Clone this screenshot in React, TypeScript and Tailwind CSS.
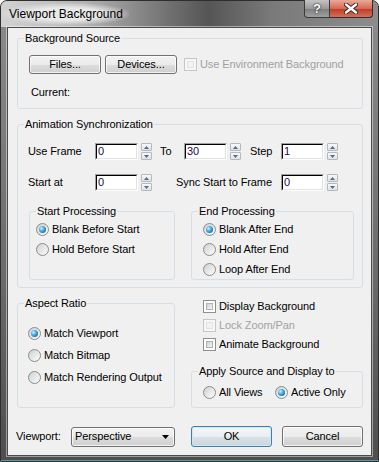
import type { ReactNode } from "react";

function Spin() {
  return (
    <div className="ml-[3px] flex h-[17px] w-[11px] flex-col gap-[1px]">
      {[0, 1].map((i) => (
        <div
          key={i}
          className="flex h-[8px] items-center justify-center rounded-[1px] border border-[#b4b9c0] bg-[linear-gradient(to_bottom,#f8f8f8,#dfe2e6)]"
        >
          <svg width="5" height="3" viewBox="0 0 5 3">
            <path d={i === 0 ? "M0 3 L2.5 0 L5 3Z" : "M0 0 L2.5 3 L5 0Z"} fill="#56698c" />
          </svg>
        </div>
      ))}
    </div>
  );
}

function Num({ v }: { v: string }) {
  return (
    <div className="flex items-center">
      <div className="h-[17px] w-[43px] border border-t-[#a0a0a0] border-l-[#a0a0a0] border-r-white border-b-white">
        <div className="h-full w-full border border-t-black border-l-black border-r-[#e3e3e3] border-b-[#e3e3e3] bg-white pl-[1px] leading-[13px] text-[#1e0a50]">
          {v}
        </div>
      </div>
      <Spin />
    </div>
  );
}

function Radio({ on }: { on?: boolean }) {
  return (
    <span className="flex h-[13px] w-[13px] shrink-0 items-center justify-center rounded-full border border-[#8a8b8c] bg-[linear-gradient(135deg,#cfd0d1,#fdfdfd)]">
      {on && (
        <span className="h-[7px] w-[7px] rounded-full bg-[radial-gradient(circle_at_35%_35%,#c8f2ff_0%,#3ca4e0_45%,#0a4a86_100%)]" />
      )}
    </span>
  );
}

function Check({ dis }: { dis?: boolean }) {
  return (
    <span
      className={`block h-[13px] w-[13px] shrink-0 border p-[2px] ${
        dis ? "border-[#c6c6c6] bg-[#f7f7f7]" : "border-[#8e8f8f] bg-white"
      }`}
    >
      <span
        className={`block h-full w-full border ${
          dis
            ? "border-[#e2e2e2] bg-[#f2f2f2]"
            : "border-[#aeb3b9] bg-[linear-gradient(135deg,#cbcfd5,#f6f6f6)]"
        }`}
      />
    </span>
  );
}

function Btn({ children, def, className }: { children: ReactNode; def?: boolean; className: string }) {
  return (
    <button
      type="button"
      className={`flex items-center justify-center rounded-[3px] border text-black ${
        def
          ? "border-[#3c7fb1] bg-[linear-gradient(to_bottom,#f3f6f8_0%,#e9eef1_50%,#d8e1e6_51%,#cbd6dc_100%)] shadow-[inset_0_0_0_1px_#cdeafb]"
          : "border-[#707070] bg-[linear-gradient(to_bottom,#f2f2f2_0%,#ebebeb_50%,#dddddd_51%,#cfcfcf_100%)] shadow-[inset_0_0_0_1px_rgba(255,255,255,0.75)]"
      } ${className}`}
    >
      {children}
    </button>
  );
}

function Group({
  title,
  className,
  inner,
  children,
}: {
  title: string;
  className: string;
  inner: string;
  children?: ReactNode;
}) {
  return (
    <fieldset className={`rounded-[3px] border border-[#d5dfe5] ${className}`}>
      <legend className="ml-[6px] px-[1px] leading-[16px]">{title}</legend>
      <div className={inner}>{children}</div>
    </fieldset>
  );
}

function Opt({ on, label, h }: { on?: boolean; label: string; h: string }) {
  return (
    <div className={`flex items-center gap-[3px] ${h}`}>
      <Radio on={on} />
      <span>{label}</span>
    </div>
  );
}

export default function App() {
  return (
    <div className="flex h-[462px] w-[379px] flex-col rounded-t-[7px] border border-[#2e2e2e] bg-[linear-gradient(to_bottom,#8d8d8d,#6a6a6a_60%,#4e4e4e)] text-[11px] tracking-[-0.1px] text-black shadow-[inset_0_-1px_0_#4aa3b5] [font-family:'Liberation_Sans',Arial,sans-serif]">
      {/* Title bar */}
      <div className="flex h-[26px] shrink-0 justify-between rounded-t-[6px] bg-[linear-gradient(to_right,#d2d2d2_0%,#b3b3b3_22%,#6f6f6f_45%,#555555_55%,#7a7a7a_72%,#8c8c8c_100%)]">
        <div className="ml-[2px] mt-[2px] h-[22px] rounded-full bg-[radial-gradient(ellipse_at_center,rgba(235,235,235,0.95)_40%,rgba(220,220,220,0)_75%)] px-[6px]">
          <span className="mt-[3px] block text-[12px] leading-[16px] tracking-normal">Viewport Background</span>
        </div>
        <div className="-mt-[1px] mr-[5px] flex h-[18px]">
          <div className="flex w-[26px] items-center justify-center rounded-bl-[4px] border border-t-0 border-[#3a3a3a] bg-[linear-gradient(to_bottom,#c4c4c4,#9a9a9a_50%,#7c7c7c_51%,#a0a0a0)] text-[13px] font-bold leading-none text-white [text-shadow:0_0_2px_#222,0_0_1px_#222]">
            ?
          </div>
          <div className="flex w-[43px] items-center justify-center rounded-br-[4px] border border-l-0 border-t-0 border-[#3a2a2a] bg-[linear-gradient(to_bottom,#eba99a,#d46a55_50%,#c03a22_51%,#d4705a)]">
            <svg width="14" height="11" viewBox="0 0 14 11">
              <path d="M2 1.5 L12 9.5 M12 1.5 L2 9.5" stroke="#3a2320" strokeWidth="4.2" strokeLinecap="round" />
              <path d="M2 1.5 L12 9.5 M12 1.5 L2 9.5" stroke="#ffffff" strokeWidth="2.4" strokeLinecap="round" />
            </svg>
          </div>
        </div>
      </div>

      {/* Client area */}
      <div className="mx-[6px] mb-[5px] flex-1 border border-[#4b4b4b] bg-[#f0f0f0] pl-[9px] pr-[8px] shadow-[0_0_0_1px_rgba(255,255,255,0.45)]">
        <Group title="Background Source" className="mt-[2px] h-[79px]" inner="pl-[11px] pt-[9px]">
          <div className="flex items-center">
            <Btn className="h-[19px] w-[72px]">Files...</Btn>
            <Btn className="ml-[4px] h-[19px] w-[72px]">Devices...</Btn>
            <div className="ml-[7px] flex items-center gap-[3px] text-[#a0a0a0]">
              <Check dis />
              <span>Use Environment Background</span>
            </div>
          </div>
          <div className="ml-[2px] mt-[10px] leading-[16px]">Current:</div>
        </Group>

        <Group title="Animation Synchronization" className="mt-[7px] h-[172px]" inner="pl-[10px] pt-[11px]">
          <div className="flex h-[17px] items-center">
            <span className="w-[67px]">Use Frame</span>
            <Num v="0" />
            <span className="ml-[8px] w-[24px]">To</span>
            <Num v="30" />
            <span className="ml-[9px] w-[31px]">Step</span>
            <Num v="1" />
          </div>
          <div className="mt-[14px] flex h-[17px] items-center">
            <span className="w-[67px]">Start at</span>
            <Num v="0" />
            <span className="ml-[24px] w-[105px]">Sync Start to Frame</span>
            <Num v="0" />
          </div>
          <div className="ml-[1px] mt-[12px] flex gap-[16px]">
            <Group title="Start Processing" className="h-[77px] w-[146px]" inner="pl-[6px]">
              <Opt on label="Blank Before Start" h="h-[20px]" />
              <Opt label="Hold Before Start" h="h-[20px]" />
            </Group>
            <Group title="End Processing" className="h-[77px] w-[163px]" inner="pl-[11px]">
              <Opt on label="Blank After End" h="h-[20px]" />
              <Opt label="Hold After End" h="h-[20px]" />
              <Opt label="Loop After End" h="h-[20px]" />
            </Group>
          </div>
        </Group>

        <div className="mt-[7px] flex gap-[16px]">
          <Group title="Aspect Ratio" className="h-[113px] w-[158px]" inner="pl-[10px] pt-[11px]">
            <Opt on label="Match Viewport" h="h-[22px]" />
            <Opt label="Match Bitmap" h="h-[22px]" />
            <Opt label="Match Rendering Output" h="h-[22px]" />
          </Group>
          <div className="flex w-[172px] flex-col">
            <div className="pl-[12px] pt-[2px]">
              <div className="flex h-[19px] items-center gap-[3px]">
                <Check />
                <span>Display Background</span>
              </div>
              <div className="flex h-[19px] items-center gap-[3px] text-[#a3a3a3]">
                <Check dis />
                <span>Lock Zoom/Pan</span>
              </div>
              <div className="flex h-[19px] items-center gap-[3px]">
                <Check />
                <span>Animate Background</span>
              </div>
            </div>
            <Group title="Apply Source and Display to" className="mt-[9px] h-[45px]" inner="pl-[11px] pt-[5px]">
              <div className="flex h-[16px] items-center">
                <div className="w-[72px]">
                  <Opt label="All Views" h="h-[16px]" />
                </div>
                <Opt on label="Active Only" h="h-[16px]" />
              </div>
            </Group>
          </div>
        </div>

        <div className="-ml-[1px] mt-[18px] flex h-[21px] items-center">
          <span className="w-[55px]">Viewport:</span>
          <div className="flex h-[20px] w-[104px] items-center justify-between rounded-[3px] border border-[#707070] bg-[linear-gradient(to_bottom,#f2f2f2_0%,#ebebeb_50%,#dddddd_51%,#cfcfcf_100%)] pl-[3px] pr-[5px] shadow-[inset_0_0_0_1px_rgba(255,255,255,0.75)]">
            <span>Perspective</span>
            <svg width="7" height="4" viewBox="0 0 7 4">
              <path d="M0 0 L7 0 L3.5 4Z" fill="#000" />
            </svg>
          </div>
          <Btn def className="ml-[16px] h-[21px] w-[81px]">
            OK
          </Btn>
          <Btn className="ml-[10px] h-[21px] w-[81px]">Cancel</Btn>
        </div>
      </div>
    </div>
  );
}
